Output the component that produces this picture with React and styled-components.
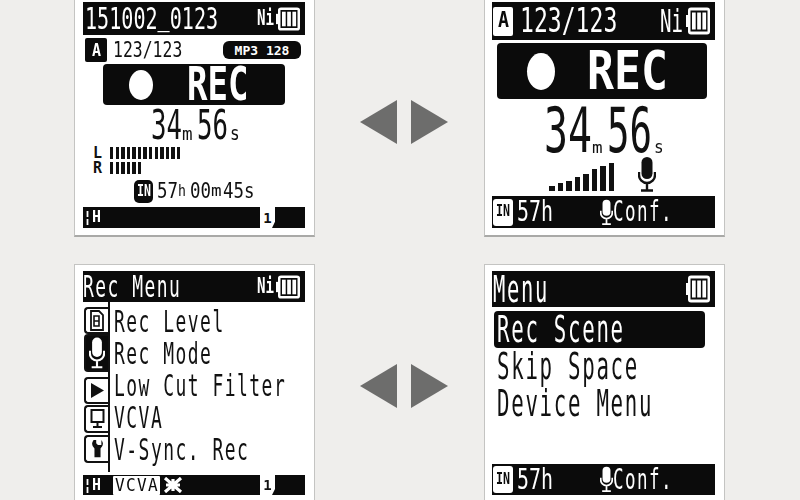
import React from "react";
import styled, { createGlobalStyle } from "styled-components";

const MONO_ADVANCE = 0.602;

const GlobalStyle = createGlobalStyle`
  html, body {
    margin: 0;
    padding: 0;
    width: 800px;
    height: 500px;
    overflow: hidden;
    background: #efeeec;
  }
`;

const Page = styled.div`
  width: 800px;
  height: 500px;
  overflow: hidden;
  display: grid;
  grid-template-columns: 241px 169px 241px;
  grid-template-rows: 237px 263px;
  row-gap: 27px;
  padding-left: 74px;
  box-sizing: border-box;
  background: #efeeec;
  font-family: "DejaVu Sans Mono", "Liberation Mono", monospace;
`;

const Screen = styled.div`
  background: #fff;
  border: 1px solid #c4c4c2;
  border-top-width: ${(p) => (p.$open ? 0 : 1)}px;
  border-bottom: ${(p) => (p.$open ? "2px solid #a9a9a7" : "0")};
  box-sizing: border-box;
  padding: ${(p) => p.$top}px 9px 0 ${(p) => p.$left || 8}px;
  display: flex;
  flex-direction: column;
  filter: blur(0.45px);
  color: #111;
`;

const Bar = styled.div`
  height: ${(p) => p.$h}px;
  margin-top: ${(p) => p.$mt || 0}px;
  background: #0b0b0b;
  color: #fff;
  display: flex;
  align-items: center;
  flex-shrink: 0;
`;

const Row = styled.div`
  height: ${(p) => p.$h}px;
  margin-top: ${(p) => p.$mt || 0}px;
  margin-left: ${(p) => p.$ml || 0}px;
  display: flex;
  align-items: center;
  flex-shrink: 0;
`;

const Spacer = styled.div`
  flex: 1;
`;

const Glyphs = styled.span`
  display: block;
  width: ${(p) => p.$width}px;
  margin-left: ${(p) => p.$ml || 0}px;
  flex-shrink: 0;
  font-size: ${(p) => p.$size}px;
  font-weight: ${(p) => (p.$bold ? 700 : 400)};
  line-height: 0.76;
  letter-spacing: ${(p) => p.$spacing}px;
  white-space: pre;
  transform: scaleX(${(p) => p.$scale});
  transform-origin: left center;
`;

const Raised = styled.span`
  display: inline-block;
  transform: translateY(-4px);
`;

// wide glyphs fill their cell (digits), the others keep a gap like the LCD letters
const Lcd = ({ size, adv, ml, bold, wide, chars, children }) => {
  const glyphWidth = size * MONO_ADVANCE;
  const scale = ((bold || wide ? 1 : 0.88) * adv) / glyphWidth;
  return (
    <Glyphs
      $size={size}
      $ml={ml}
      $bold={bold}
      $width={(chars || children.length) * adv}
      $scale={scale}
      $spacing={adv / scale - glyphWidth}
    >
      {children}
    </Glyphs>
  );
};

const Badge = styled.div`
  width: ${(p) => p.$w}px;
  height: ${(p) => p.$h}px;
  margin-left: ${(p) => p.$ml || 0}px;
  background: ${(p) => (p.$invert ? "#fff" : "#0b0b0b")};
  color: ${(p) => (p.$invert ? "#0b0b0b" : "#fff")};
  border-radius: ${(p) => p.$r || 2}px;
  display: flex;
  align-items: center;
  justify-content: center;
  flex-shrink: 0;
  overflow: hidden;
`;

const Pill = styled.div`
  width: 78px;
  height: 18px;
  margin-left: auto;
  margin-right: 4px;
  background: #0b0b0b;
  color: #fff;
  border-radius: 6px;
  display: flex;
  align-items: center;
  justify-content: center;
  font-size: 13px;
  font-weight: 700;
  white-space: pre;
`;

const RecBar = styled.div`
  width: ${(p) => p.$w}px;
  height: ${(p) => p.$h}px;
  margin-top: ${(p) => p.$mt}px;
  margin-left: ${(p) => p.$ml}px;
  background: #0b0b0b;
  color: #fff;
  border-radius: 4px;
  display: flex;
  align-items: center;
  flex-shrink: 0;
`;

const RecDot = styled.div`
  width: ${(p) => p.$w}px;
  height: ${(p) => p.$h}px;
  margin-left: ${(p) => p.$ml}px;
  margin-right: ${(p) => p.$mr}px;
  background: #fff;
  border-radius: 50%;
  flex-shrink: 0;
`;

const TimeRow = styled.div`
  height: ${(p) => p.$h}px;
  margin-top: ${(p) => p.$mt}px;
  margin-left: ${(p) => p.$ml}px;
  display: flex;
  align-items: flex-end;
  flex-shrink: 0;
`;

const Meter = styled.div`
  height: 12px;
  margin-left: 5px;
  display: flex;
  gap: 2.2px;
`;

const MeterTick = styled.div`
  width: 3.4px;
  height: 100%;
  background: #111;
`;

const MeterLabel = styled.div`
  width: 12px;
  font-size: 15px;
  font-weight: 700;
  line-height: 12px;
`;

const Signal = styled.div`
  width: 66px;
  height: 29px;
  margin-left: 57px;
  margin-top: 5px;
  display: flex;
  align-items: flex-end;
  gap: 3px;
`;

const SignalBar = styled.div`
  width: 5.5px;
  height: ${(p) => p.$h}px;
  background: #111;
`;

const Tab = styled.div`
  width: 15px;
  height: 100%;
  margin-left: ${(p) => p.$ml}px;
  background: #fff;
  color: #111;
  display: flex;
  align-items: center;
  justify-content: center;
  font-size: 14px;
  font-weight: 700;
  clip-path: polygon(0 0, 100% 0, 100% 70%, 80% 100%, 0 100%);
`;

const MenuBody = styled.div`
  height: 170px;
  display: flex;
  flex-shrink: 0;
`;

const IconRail = styled.div`
  width: 24px;
  padding-left: 1px;
  display: flex;
  flex-direction: column;
  border-right: 2px solid #111;
  flex-shrink: 0;
`;

const RailItem = styled.div`
  height: ${(p) => p.$h}px;
  margin-top: ${(p) => p.$mt || 0}px;
  box-sizing: border-box;
  border: 2px solid #111;
  border-right: 0;
  border-radius: 4px 0 0 4px;
  display: flex;
  align-items: center;
  justify-content: center;
  background: ${(p) => (p.$active ? "#0b0b0b" : "transparent")};
  flex-shrink: 0;
`;

const MenuList = styled.div`
  padding-left: 4px;
  padding-top: 4px;
  display: flex;
  flex-direction: column;
`;

const MenuRow = styled.div`
  height: 32px;
  display: flex;
  align-items: center;
`;

const SceneRow = styled.div`
  height: ${(p) => p.$h}px;
  margin-top: ${(p) => p.$mt || 0}px;
  margin-left: 2px;
  width: 211px;
  padding-left: 3px;
  box-sizing: border-box;
  display: flex;
  align-items: center;
  flex-shrink: 0;
  border-radius: 4px;
  background: ${(p) => (p.$selected ? "#0b0b0b" : "transparent")};
  color: ${(p) => (p.$selected ? "#fff" : "#111")};
`;

const ArrowCell = styled.div`
  display: flex;
  align-items: center;
  gap: 14px;
  padding-left: 45px;
  margin-top: ${(p) => p.$mt}px;
  height: ${(p) => p.$h}px;
`;

const Triangle = styled.div`
  width: 37px;
  height: 44px;
  background: #6d6d6c;
  clip-path: ${(p) =>
    p.$dir === "left"
      ? "polygon(100% 0, 100% 100%, 0 50%)"
      : "polygon(0 0, 100% 50%, 0 100%)"};
`;

const Glyph = styled.svg`
  flex-shrink: 0;
  display: block;
  margin-left: ${(p) => p.$ml || 0}px;
  margin-right: ${(p) => p.$mr || 0}px;
`;

const Battery = ({ h = 23, ml, mr }) => (
  <Glyph viewBox="0 0 25 28" width="25" height={h} preserveAspectRatio="none" $ml={ml} $mr={mr}>
    <rect x="0" y="8" width="3" height="12" fill="#fff" />
    <rect x="2" y="0.500" width="22" height="27" rx="3" fill="#fff" />
    <rect x="4.500" y="3.500" width="17" height="21" fill="#0b0b0b" />
    <rect x="6" y="5.500" width="3.700" height="17" fill="#fff" />
    <rect x="11.200" y="5.500" width="3.700" height="17" fill="#fff" />
    <rect x="16.400" y="5.500" width="3.700" height="17" fill="#fff" />
  </Glyph>
);

const Mic = ({ color = "#111", w = 18, h = 35, ml, mr }) => (
  <Glyph viewBox="0 0 18 35" width={w} height={h} $ml={ml} $mr={mr}>
    <rect x="3.500" y="0" width="11" height="22" rx="5.500" fill={color} />
    <path d="M1 15v3a8 8 0 0 0 16 0v-3M9 26v7M3 33.500h12" fill="none" stroke={color} strokeWidth="2.400" />
  </Glyph>
);

const DocIcon = () => (
  <Glyph viewBox="0 0 14 21" width="14" height="21">
    <path d="M1 1h8l4 4v15H1z" fill="none" stroke="#111" strokeWidth="1.800" />
    <path d="M4 6h5v10H4zM4 11h5" fill="none" stroke="#111" strokeWidth="1.600" />
  </Glyph>
);

const PlayIcon = () => (
  <Glyph viewBox="0 0 13 15" width="13" height="15">
    <path d="M0 0l13 7.500L0 15z" fill="#111" />
  </Glyph>
);

const MonitorIcon = () => (
  <Glyph viewBox="0 0 15 21" width="15" height="21">
    <path d="M1.500 1h12v12h-12zM7.500 13v4M3 18h9" fill="none" stroke="#111" strokeWidth="2" />
  </Glyph>
);

const WrenchIcon = () => (
  <Glyph viewBox="0 0 15 21" width="13" height="20">
    <path d="M3 0Q-1 5 4 10v10h7V10Q16 5 12 0v6H8L6 4V0z" fill="#111" />
  </Glyph>
);

const CrossIcon = () => (
  <Glyph viewBox="0 0 20 16" width="20" height="16" $ml={3}>
    <path d="M2 1l16 14M18 1L2 15M10 2v12M3 8h14" stroke="#fff" strokeWidth="3.200" fill="none" />
  </Glyph>
);

const FolderA = () => (
  <Badge $w={22} $h={24}>
    <Lcd size={17} adv={9} bold>
      A
    </Lcd>
  </Badge>
);

const Hold = () => (
  <Lcd size={16} adv={9} bold>
    {"¦H"}
  </Lcd>
);

const ConfFooter = ({ h, mt }) => (
  <Bar $h={h} $mt={mt}>
    <Badge $w={20} $h={27} $ml={1} $invert $r={3}>
      <Lcd size={15} adv={7} bold>
        IN
      </Lcd>
    </Badge>
    <Lcd size={28} adv={12} ml={4} wide>
      57h
    </Lcd>
    <Mic color="#fff" w={13} h={29} ml={47} />
    <Lcd size={28} adv={12}>
      Conf.
    </Lcd>
  </Bar>
);

function TopLeft() {
  return (
    <Screen $open $top={2}>
      <Bar $h={33}>
        <Lcd size={31} adv={12.1} ml={2} chars={11} wide>
          151002<Raised>_</Raised>0123
        </Lcd>
        <Spacer />
        <Lcd size={21} adv={8.5} bold>
          Ni
        </Lcd>
        <Battery h={24} ml={2} mr={4} />
      </Bar>
      <Row $h={24} $mt={3} $ml={2}>
        <FolderA />
        <Lcd size={22} adv={9.9} ml={6} wide>
          123/123
        </Lcd>
        <Pill>MP3 128</Pill>
      </Row>
      <RecBar $w={182} $h={41} $mt={2} $ml={20}>
        <RecDot $w={24} $h={30} $ml={26} $mr={34} />
        <Lcd size={46} adv={20.5} bold>
          REC
        </Lcd>
      </RecBar>
      <TimeRow $h={31} $mt={5} $ml={68}>
        <Lcd size={41} adv={15.5} wide>
          34
        </Lcd>
        <Lcd size={18} adv={12}>
          m
        </Lcd>
        <Lcd size={41} adv={15.5} ml={3} wide>
          56
        </Lcd>
        <Lcd size={20} adv={11} ml={2}>
          s
        </Lcd>
      </TimeRow>
      <Row $h={12} $mt={6} $ml={10}>
        <MeterLabel>L</MeterLabel>
        <Meter>
          {Array.from({ length: 13 }, (_, i) => (
            <MeterTick key={i} />
          ))}
        </Meter>
      </Row>
      <Row $h={12} $mt={3} $ml={10}>
        <MeterLabel>R</MeterLabel>
        <Meter>
          {Array.from({ length: 6 }, (_, i) => (
            <MeterTick key={i} />
          ))}
        </Meter>
      </Row>
      <Row $h={23} $mt={6} $ml={51}>
        <Badge $w={19} $h={23} $r={5}>
          <Lcd size={15} adv={7} bold>
            IN
          </Lcd>
        </Badge>
        <Lcd size={22} adv={10.5} ml={4} wide>
          57
        </Lcd>
        <Lcd size={15} adv={9}>
          h
        </Lcd>
        <Lcd size={22} adv={10.5} ml={3} wide>
          00
        </Lcd>
        <Lcd size={15} adv={12}>
          m
        </Lcd>
        <Lcd size={22} adv={10.5} wide>
          45s
        </Lcd>
      </Row>
      <Bar $h={21} $mt={4}>
        <Hold />
        <Tab $ml={159}>1</Tab>
      </Bar>
    </Screen>
  );
}

function TopRight() {
  return (
    <Screen $open $top={2} $left={7}>
      <Bar $h={38}>
        <Badge $w={20} $h={29} $ml={1} $invert>
          <Lcd size={21} adv={11} bold>
            A
          </Lcd>
        </Badge>
        <Lcd size={33} adv={13.9} ml={7} wide>
          123/123
        </Lcd>
        <Spacer />
        <Lcd size={32} adv={11.5} wide>
          Ni
        </Lcd>
        <Battery h={28} ml={3} mr={4} />
      </Bar>
      <RecBar $w={210} $h={56} $mt={3} $ml={5}>
        <RecDot $w={28} $h={37} $ml={30} $mr={32} />
        <Lcd size={54} adv={27} bold>
          REC
        </Lcd>
      </RecBar>
      <TimeRow $h={46} $mt={9} $ml={52}>
        <Lcd size={62} adv={24} wide>
          34
        </Lcd>
        <Lcd size={16} adv={12}>
          m
        </Lcd>
        <Lcd size={62} adv={22.5} ml={3} wide>
          56
        </Lcd>
        <Lcd size={18} adv={11} ml={2}>
          s
        </Lcd>
      </TimeRow>
      <Row $h={36} $mt={2}>
        <Signal>
          {[5, 8, 10, 14, 17, 22, 25, 28].map((h) => (
            <SignalBar key={h} $h={h} />
          ))}
        </Signal>
        <Mic ml={23} />
      </Row>
      <ConfFooter h={32} mt={4} />
    </Screen>
  );
}

function BottomLeft() {
  return (
    <Screen $top={6}>
      <Bar $h={31}>
        <Lcd size={31} adv={12.3}>
          Rec Menu
        </Lcd>
        <Spacer />
        <Lcd size={21} adv={8.5} bold>
          Ni
        </Lcd>
        <Battery h={24} ml={2} mr={4} />
      </Bar>
      <MenuBody>
        <IconRail>
          <RailItem $h={27} $mt={5}>
            <DocIcon />
          </RailItem>
          <RailItem $h={38} $active>
            <Mic color="#fff" w={16} h={32} />
          </RailItem>
          <RailItem $h={27} $mt={5}>
            <PlayIcon />
          </RailItem>
          <RailItem $h={28} $mt={1}>
            <MonitorIcon />
          </RailItem>
          <RailItem $h={28} $mt={2}>
            <WrenchIcon />
          </RailItem>
        </IconRail>
        <MenuList>
          {["Rec Level", "Rec Mode", "Low Cut Filter", "VCVA", "V-Sync. Rec"].map((t) => (
            <MenuRow key={t}>
              <Lcd size={31} adv={12.3}>
                {t}
              </Lcd>
            </MenuRow>
          ))}
        </MenuList>
      </MenuBody>
      <Bar $h={20} $mt={3}>
        <Hold />
        <Badge $w={47} $h={19} $ml={12} $invert $r={1}>
          <Lcd size={17} adv={11}>
            VCVA
          </Lcd>
        </Badge>
        <CrossIcon />
        <Tab $ml={77}>1</Tab>
      </Bar>
    </Screen>
  );
}

function BottomRight() {
  return (
    <Screen $top={6} $left={7}>
      <Bar $h={36}>
        <Lcd size={38} adv={14} ml={1}>
          Menu
        </Lcd>
        <Spacer />
        <Battery h={28} mr={4} />
      </Bar>
      <SceneRow $h={37} $mt={4} $selected>
        <Lcd size={38} adv={14.2}>
          Rec Scene
        </Lcd>
      </SceneRow>
      <SceneRow $h={37}>
        <Lcd size={38} adv={14.2}>
          Skip Space
        </Lcd>
      </SceneRow>
      <SceneRow $h={37}>
        <Lcd size={38} adv={14.2}>
          Device Menu
        </Lcd>
      </SceneRow>
      <ConfFooter h={31} mt={42} />
    </Screen>
  );
}

const Arrows = ({ h, mt }) => (
  <ArrowCell $h={h} $mt={mt}>
    <Triangle $dir="left" />
    <Triangle $dir="right" />
  </ArrowCell>
);

export default function App() {
  return (
    <>
      <GlobalStyle />
      <Page>
        <TopLeft />
        <Arrows h={44} mt={100} />
        <TopRight />
        <BottomLeft />
        <Arrows h={44} mt={100} />
        <BottomRight />
      </Page>
    </>
  );
}
